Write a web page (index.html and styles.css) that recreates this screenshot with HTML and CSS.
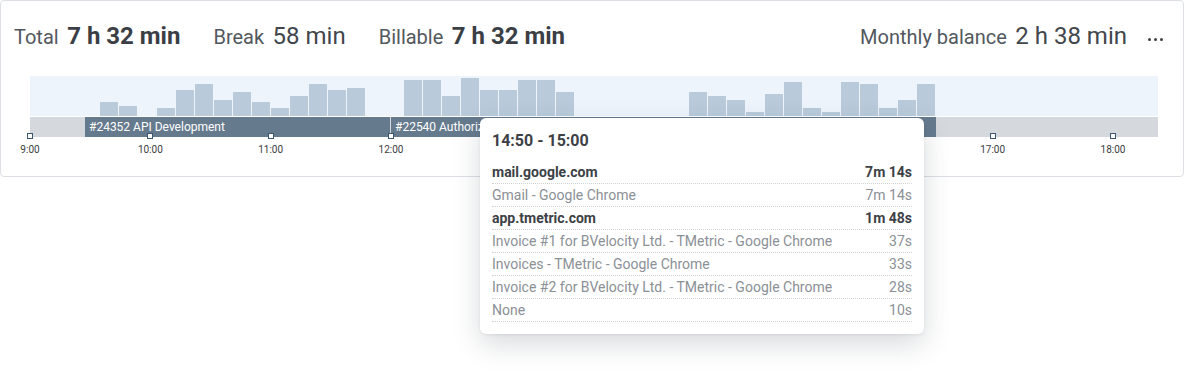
FILE: index.html
```html
<!DOCTYPE html>
<html>
<head>
<meta charset="utf-8">
<link rel="stylesheet" href="styles.css">
</head>
<body>
<div class="card">
  <div class="header">
    <div class="stat"><span class="label">Total</span><span class="value bold">7 h 32 min</span></div>
    <div class="stat"><span class="label">Break</span><span class="value">58 min</span></div>
    <div class="stat"><span class="label">Billable</span><span class="value bold">7 h 32 min</span></div>
    <div class="spacer"></div>
    <div class="stat last"><span class="label">Monthly balance</span><span class="value">2 h 38 min</span></div>
    <div class="more"><span></span><span></span><span></span></div>
  </div>
  <div class="chart">
    <div class="bars" id="bars"></div>
    <div class="timeline">
      <div class="seg seg-a">#24352 API Development</div>
      <div class="seg seg-b">#22540 Authorization module</div>
    </div>
    <div class="ticks" id="ticks"></div>
  </div>
</div>
<div class="tooltip">
  <div class="tt-title">14:50 - 15:00</div>
  <div class="row strong"><span>mail.google.com</span><span>7m 14s</span></div>
  <div class="row"><span>Gmail - Google Chrome</span><span>7m 14s</span></div>
  <div class="row strong"><span>app.tmetric.com</span><span>1m 48s</span></div>
  <div class="row"><span>Invoice #1 for BVelocity Ltd. - TMetric - Google Chrome</span><span>37s</span></div>
  <div class="row"><span>Invoices - TMetric - Google Chrome</span><span>33s</span></div>
  <div class="row"><span>Invoice #2 for BVelocity Ltd. - TMetric - Google Chrome</span><span>28s</span></div>
  <div class="row"><span>None</span><span>10s</span></div>
</div>
<script src="app.js"></script>
</body>
</html>
```
FILE: app.js
```js
var heights = [14,10,0,8,26,32,16,24,14,8,20,32,26,28,0,0,36,36,20,38,26,26,36,36,24,0,0,0,0,0,0,24,20,16,4,22,34,8,4,34,32,8,16,32];
var bars = document.getElementById('bars');
heights.forEach(function(h){
  var d = document.createElement('div');
  d.className = 'bar';
  d.style.height = h + 'px';
  bars.appendChild(d);
});
var ticks = document.getElementById('ticks');
for (var i = 9; i <= 18; i++) {
  var t = document.createElement('div');
  t.className = 'tick';
  t.style.left = ((i - 9) * 120.33) + 'px';
  t.innerHTML = '<span class="sq"></span><span class="tl">' + i + ':00</span>';
  ticks.appendChild(t);
}
```
FILE: styles.css
```css
html, body { margin: 0; padding: 0; background: #fff; }
body { font-family: Roboto, "Liberation Sans", Arial, sans-serif; position: relative; width: 1184px; height: 377px; overflow: hidden; }
.card {
  box-sizing: border-box;
  width: 1184px;
  height: 177px;
  border: 1px solid #dcdfe3;
  border-radius: 4px;
}
.header {
  display: flex;
  align-items: baseline;
  height: 75px;
  padding: 21px 20px 0 13px;
  box-sizing: border-box;
}
.stat { display: flex; align-items: baseline; margin-right: 33px; }
.stat.last { margin-right: 0; }
.label { font-size: 20px; color: #53585e; margin-right: 8.5px; }
.value { font-size: 24px; color: #42464c; }
.value.bold { font-weight: 700; color: #3b3f45; }
.spacer { flex: 1; }
.more { display: flex; gap: 3px; margin-left: 21px; align-self: flex-start; margin-top: 16px; }
.more span { width: 3px; height: 3px; border-radius: 50%; background: #3b3f45; }
.chart { margin-left: 29px; width: 1128px; position: relative; }
.bars {
  height: 40px;
  background: #eef4fc;
  display: flex;
  align-items: flex-end;
  padding-left: 70px;
  gap: 1px;
  border-bottom: 1px solid #fff;
}
.bar { width: 18px; background: #b9cbdb; flex: none; }
.timeline { height: 20px; background: #d5d8dc; display: flex; padding-left: 55px; }
.seg { background: #667a8e; color: #fff; font-size: 12px; line-height: 20px; padding-left: 4px; box-sizing: border-box; white-space: nowrap; overflow: hidden; }
.seg-a { width: 305px; margin-right: 1px; }
.seg-b { width: 545px; }
.ticks { position: relative; height: 38px; }
.tick { position: absolute; top: -4px; width: 0; }
.sq { position: absolute; left: -3px; top: 0; width: 4px; height: 4px; border: 1px solid #3e566d; background: #fff; }
.tl { position: absolute; top: 11px; left: -20px; width: 40px; text-align: center; font-size: 10px; color: #3a3d41; line-height: 12px; }
.tooltip {
  position: absolute;
  left: 480px;
  top: 118px;
  width: 444px;
  box-sizing: border-box;
  padding: 12px 12px 12px 12px;
  background: #fff;
  border-radius: 6px;
  box-shadow: 0 10px 28px rgba(40, 50, 60, 0.18), 0 1px 3px rgba(40,50,60,0.08);
}
.tt-title { font-size: 16px; font-weight: 700; color: #3d4146; line-height: 22px; margin-bottom: 9px; }
.row {
  display: flex;
  justify-content: space-between;
  font-size: 14px;
  line-height: 22px;
  color: #8b9096;
  border-bottom: 1px dotted #cfd3d8;
}
.row.strong { font-weight: 700; color: #3d4146; }
```
